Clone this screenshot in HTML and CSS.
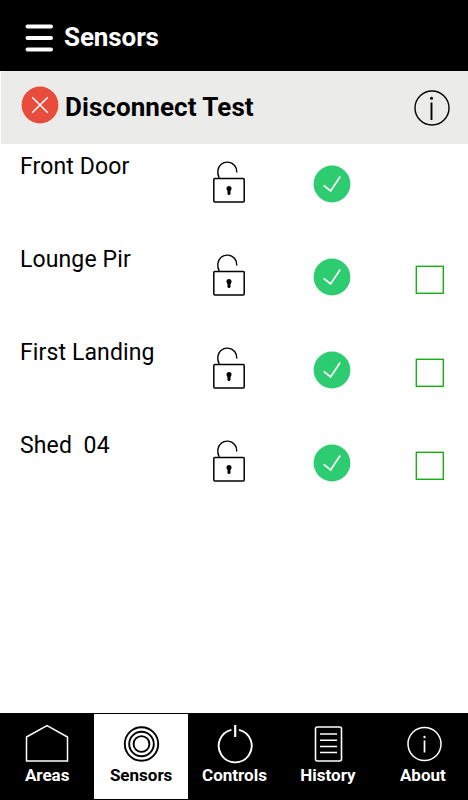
FILE: index.html
```
<!DOCTYPE html>
<html lang="en">

<head>
    <meta charset="utf-8">
    <meta name="viewport" content="width=device-width">
    <title>Sensors</title>
    <link rel="stylesheet" href="styles.css">
</head>

<body>
    <svg width="0" height="0" class="defs">
        <symbol id="lock" viewBox="0 0 34 44">
            <path d="M7.2 18C6 15.500 5.600 13.300 5.800 10.800A9.300 9.300 0 0 1 24.800 12.500" fill="none" stroke="#000" stroke-width="1.400"/>
            <rect x="1.800" y="18.500" width="30.400" height="23.400" rx="1" fill="none" stroke="#000" stroke-width="1.500"/>
            <circle cx="17" cy="28.500" r="2.500"/>
            <path d="M15.500 29h3v4.500a1.500 1.500 0 0 1-3 0z"/>
        </symbol>
        <symbol id="tick" viewBox="0 0 38 38">
            <circle cx="19" cy="19" r="18.400" fill="#2ecc71"/>
            <path d="M10.700 20.300L17.600 26L27.200 11.500" fill="none" stroke="#fff" stroke-width="1.700"/>
        </symbol>
        <symbol id="box" viewBox="0 0 30 30">
            <rect x="1.300" y="1.300" width="27" height="27" fill="none" stroke="#14b014" stroke-width="1.400"/>
        </symbol>
    </svg>

    <header class="header">
        <svg class="menu" width="28" height="30">
            <path d="M2.500 3.500h23.500M2.500 15h23.500M2.500 26.500h23.500" stroke="#fff" stroke-width="4" stroke-linecap="round"/>
        </svg>
        <h1>Sensors</h1>
    </header>

    <div class="area">
        <svg class="cross" width="38" height="38">
            <circle cx="19" cy="19" r="18.400" fill="#e74c3c"/>
            <path d="M11.200 11.200L26.800 26.800M26.800 11.200L11.200 26.800" stroke="#fff" stroke-width="1.500"/>
        </svg>
        <h2>Disconnect Test</h2>
        <svg class="info" width="36" height="36">
            <circle cx="18" cy="18" r="17" fill="none" stroke="#000" stroke-width="1.400"/>
            <circle cx="17.500" cy="8.200" r="1.500"/>
            <path d="M17.500 12.500v17.500" stroke="#000" stroke-width="1.900"/>
        </svg>
    </div>

    <main class="sensors">
        <div class="row">
            <span class="name">Front Door</span>
            <svg class="lock"><use href="#lock"/></svg>
            <svg class="tick"><use href="#tick"/></svg>
        </div>
        <div class="row">
            <span class="name">Lounge Pir</span>
            <svg class="lock"><use href="#lock"/></svg>
            <svg class="tick"><use href="#tick"/></svg>
            <svg class="box"><use href="#box"/></svg>
        </div>
        <div class="row">
            <span class="name">First Landing</span>
            <svg class="lock"><use href="#lock"/></svg>
            <svg class="tick"><use href="#tick"/></svg>
            <svg class="box"><use href="#box"/></svg>
        </div>
        <div class="row">
            <span class="name">Shed  04</span>
            <svg class="lock"><use href="#lock"/></svg>
            <svg class="tick"><use href="#tick"/></svg>
            <svg class="box"><use href="#box"/></svg>
        </div>
    </main>

    <nav class="tabs">
        <a class="tab">
            <svg width="44" height="40">
                <path d="M1.500 13L22 1.600L42.500 13V37H1.500z" fill="none" stroke="#fff" stroke-width="1.500"/>
            </svg>
            <span>Areas</span>
        </a>
        <a class="tab active">
            <svg width="38" height="40">
                <g fill="none" stroke="#000" stroke-width="1.900">
                    <circle cx="19.500" cy="20" r="16.700"/>
                    <circle cx="19.500" cy="20" r="12.300"/>
                    <circle cx="19.500" cy="20" r="7.900"/>
                </g>
            </svg>
            <span>Sensors</span>
        </a>
        <a class="tab">
            <svg width="38" height="40">
                <path d="M23 5.800A16.500 16.500 0 1 1 15.400 5.800" fill="none" stroke="#fff" stroke-width="1.900"/>
                <path d="M19.200 1v12" stroke="#fff" stroke-width="2.200"/>
            </svg>
            <span>Controls</span>
        </a>
        <a class="tab">
            <svg width="30" height="40">
                <rect x="2.500" y="3" width="26" height="34" rx="2" fill="none" stroke="#fff" stroke-width="1.600"/>
                <path d="M7 10h17M7 16.200h17M7 22.400h17M7 28.600h17" stroke="#fff" stroke-width="1.500"/>
            </svg>
            <span>History</span>
        </a>
        <a class="tab about">
            <svg width="38" height="40">
                <circle cx="20.500" cy="20" r="16.500" fill="none" stroke="#fff" stroke-width="1.500"/>
                <circle cx="20.500" cy="13" r="1.200" fill="#fff"/>
                <path d="M20.500 16.500v12" stroke="#fff" stroke-width="1.700"/>
            </svg>
            <span>About</span>
        </a>
    </nav>
</body>

</html>
```

FILE: styles.css
```
body {
    margin: 0;
    height: 800px;
    display: flex;
    flex-direction: column;
    background-color: #fff;
    font-family: Roboto, sans-serif;
    color: #000;
    overflow: hidden;
}

svg {
    display: block;
    flex: none;
}

.defs {
    position: absolute;
}

.header {
    height: 71px;
    padding: 3px 0 0 25px;
    box-sizing: border-box;
    display: flex;
    align-items: center;
    background-color: #000;
    color: #fff;
}

.header .menu {
    margin-top: 1px;
}

.header h1 {
    margin: 0 0 0 11px;
    font-size: 26px;
    font-weight: bold;
    line-height: 30px;
    letter-spacing: -0.100px;
}

.area {
    height: 73px;
    margin-left: 1px;
    padding: 0 18px 0 20px;
    box-sizing: border-box;
    display: flex;
    align-items: center;
    background-color: #ebebe9;
}

.area .cross {
    margin-bottom: 5px;
}

.area h2 {
    margin: 0 0 2px 6px;
    font-size: 26px;
    font-weight: bold;
    line-height: 30px;
    letter-spacing: 0.060px;
}

.area .info {
    margin-left: auto;
}

.sensors {
    flex: 1;
}

.row {
    height: 93.300px;
    padding-left: 20px;
    display: grid;
    grid-template-columns: 192px 100.600px 102.400px 1fr;
    align-items: start;
}

.row:first-child {
    height: 92.500px;
}

.name {
    margin-top: 9px;
    font-size: 23px;
    line-height: 28px;
    letter-spacing: 0.120px;
    white-space: pre;
}

.lock {
    width: 34px;
    height: 44px;
    margin-top: 16px;
}

.tick {
    width: 38px;
    height: 38px;
    margin-top: 21px;
}

.box {
    width: 30px;
    height: 30px;
    margin-top: 28px;
}

.tabs {
    height: 87px;
    padding-top: 1px;
    box-sizing: border-box;
    display: flex;
    background-color: #000;
}

.tab {
    width: 93.500px;
    height: 85px;
    padding-top: 10px;
    box-sizing: border-box;
    display: flex;
    flex-direction: column;
    align-items: center;
    color: #fff;
    font-size: 17px;
    font-weight: bold;
    line-height: 20px;
}

.tab:first-child {
    width: 94.500px;
}

.tab span {
    margin-top: 1px;
}

.active {
    background-color: #fff;
    color: #000;
}

.about {
    padding-left: 3px;
}
```
